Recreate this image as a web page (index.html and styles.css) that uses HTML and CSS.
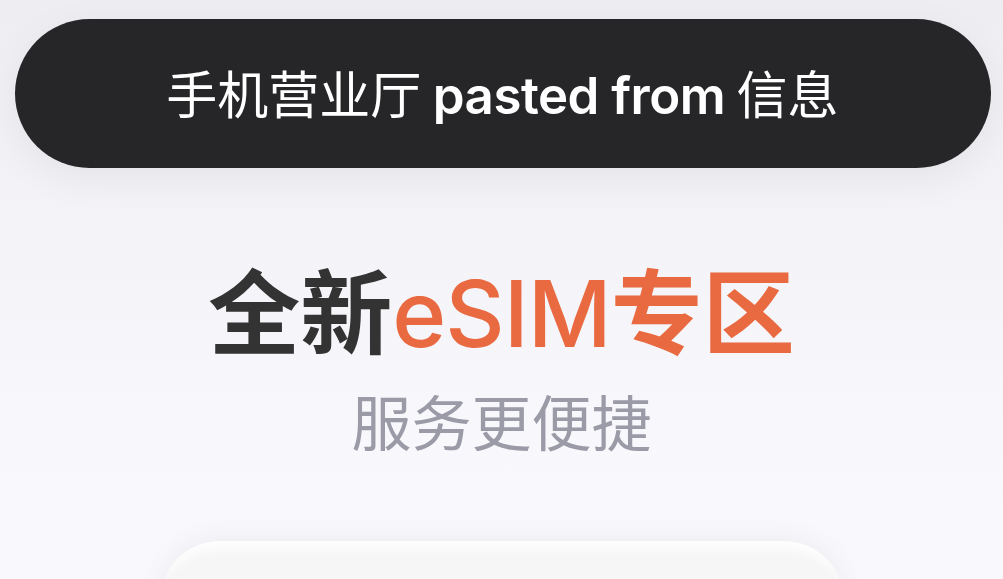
FILE: index.html
```html
<!DOCTYPE html>
<html lang="zh-CN">
<head>
<meta charset="utf-8">
<title>全新eSIM专区</title>
<link rel="stylesheet" href="styles.css">
</head>
<body>
<div class="page">
  <div class="toast"><span class="toast-text">手机营业厅 <span class="latin">pasted from</span> 信息</span></div>
  <h1 class="title"><span class="dark">全新</span><span class="accent"><span class="latin-title">eSIM</span>专区</span></h1>
  <p class="subtitle">服务更便捷</p>
  <div class="card"></div>
</div>
</body>
</html>
```
FILE: styles.css
```css
html, body {
  margin: 0;
  padding: 0;
  height: 100%;
  overflow: hidden;
}
body {
  background: linear-gradient(180deg, #eeeef2 0px, #f3f3f7 200px, #f8f8fc 420px, #f9f9fd 579px);
  font-family: "Noto Sans CJK SC", "Noto Sans", sans-serif;
}
.page {
  display: flex;
  flex-direction: column;
  align-items: center;
  padding-top: 19px;
}
.toast {
  box-sizing: border-box;
  width: 976px;
  height: 149px;
  margin-left: 2px;
  border-radius: 75px;
  background: #262628;
  box-shadow: 0 10px 40px rgba(0, 0, 0, 0.06);
  display: flex;
  align-items: center;
  justify-content: center;
}
.toast-text {
  color: #ffffff;
  font-size: 51px;
  line-height: 1;
  font-weight: 400;
  margin-left: 0;
  white-space: nowrap;
}
.latin {
  font-family: "Inter", "Noto Sans", sans-serif;
  font-weight: 600;
  letter-spacing: -0.5px;
}
.title {
  margin: 89px 0 0 0;
  height: 100px;
  font-size: 92px;
  line-height: 100px;
  font-weight: 700;
  letter-spacing: 0;
  white-space: nowrap;
}
.dark { color: #333333; }
.accent { color: #e96a40; }
.latin-title {
  font-family: "Inter", "Noto Sans", sans-serif;
  font-weight: 500;
  letter-spacing: -1px;
}
.subtitle {
  margin: 28px 0 0 0;
  font-size: 60px;
  line-height: 70px;
  color: #9b9ba7;
  font-weight: 400;
}
.card {
  margin-top: 86px;
  width: 684px;
  height: 200px;
  border-radius: 60px;
  background: #f6f6f6;
  box-shadow: 0 -2px 24px rgba(60, 60, 90, 0.08), inset 0 14px 10px -6px rgba(255, 255, 255, 0.9), inset 0 2px 6px rgba(0, 0, 0, 0.03);
}
```
